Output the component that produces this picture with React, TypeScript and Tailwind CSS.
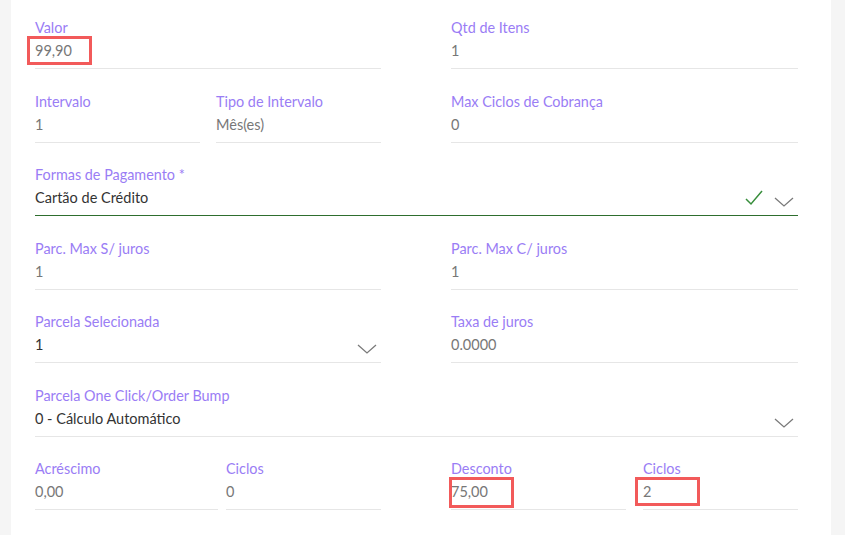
import React from 'react';

function Chevron() {
  return (
    <svg width="20" height="12" viewBox="0 0 20 12" fill="none" className="shrink-0">
      <path d="M1 2 L10 10 L19 2" stroke="#7a7a7a" strokeWidth="1.3" />
    </svg>
  );
}

function Check() {
  return (
    <svg width="18" height="16" viewBox="0 0 18 16" fill="none" className="shrink-0">
      <path d="M1 9 L6 14 L17 1" stroke="#388e3c" strokeWidth="1.5" />
    </svg>
  );
}

interface FieldProps {
  label: string;
  value: string;
  className?: string;
  boxed?: 'wide' | 'tight';
}

function TextField({ label, value, className = '', boxed }: FieldProps) {
  return (
    <div className={`flex flex-col border-b border-[#e6e6e6] pb-[10px] ${className}`}>
      <span className="text-[14.4px] leading-5 text-[#9a7df5]">{label}</span>
      <div className="relative h-5">
        <span className="text-[14.5px] leading-5 text-[#777]">{value}</span>
        {boxed === 'wide' && (
          <span className="absolute -left-2 -top-[2px] h-[29px] w-[65px] border-[3px] border-[#f25a5a]" />
        )}
        {boxed === 'tight' && (
          <span className="absolute -left-[2px] -top-[2px] h-[31px] w-[65px] border-[3px] border-[#f25a5a]" />
        )}
      </div>
    </div>
  );
}

interface SelectProps {
  label: string;
  value: string;
  valid?: boolean;
  className?: string;
}

function SelectField({ label, value, valid, className = '' }: SelectProps) {
  return (
    <div
      className={`flex flex-col pb-[7px] ${
        valid ? 'border-b border-[#2e6e2e]' : 'border-b border-[#e6e6e6]'
      } ${className}`}
    >
      <span className="text-[14.4px] leading-5 text-[#9a7df5]">{label}</span>
      <div className="mt-[3px] flex h-5 items-center justify-between">
        <span className="text-[14.5px] leading-5 text-[#333]">{value}</span>
        <div className="flex items-center gap-[11px] pr-1">
          {valid && <Check />}
          <div className="mt-2">
            <Chevron />
          </div>
        </div>
      </div>
    </div>
  );
}

export default function App() {
  return (
    <div
      className="flex h-[535px] w-[845px] overflow-hidden bg-[#f5f5f5]"
      style={{ fontFamily: 'Lato, "Noto Sans", sans-serif' }}
    >
      <div className="ml-[11px] flex w-[820px] flex-col gap-[22.5px] bg-white pl-6 pr-[33px] pt-[18px]">
        <div className="grid grid-cols-[346px_347px] gap-x-[70px]">
          <TextField label="Valor" value="99,90" boxed="wide" />
          <TextField label="Qtd de Itens" value="1" />
        </div>

        <div className="grid grid-cols-[346px_347px] gap-x-[70px]">
          <div className="grid grid-cols-[165px_165px] gap-x-4">
            <TextField label="Intervalo" value="1" />
            <TextField label="Tipo de Intervalo" value="Mês(es)" />
          </div>
          <TextField label="Max Ciclos de Cobrança" value="0" />
        </div>

        <SelectField label="Formas de Pagamento *" value="Cartão de Crédito" valid />

        <div className="grid grid-cols-[346px_347px] gap-x-[70px]">
          <TextField label="Parc. Max S/ juros" value="1" />
          <TextField label="Parc. Max C/ juros" value="1" />
        </div>

        <div className="grid grid-cols-[346px_347px] items-start gap-x-[70px]">
          <SelectField label="Parcela Selecionada" value="1" />
          <TextField label="Taxa de juros" value="0.0000" />
        </div>

        <SelectField label="Parcela One Click/Order Bump" value="0 - Cálculo Automático" />

        <div className="grid grid-cols-[346px_347px] gap-x-[70px]">
          <div className="grid grid-cols-[183px_155px] gap-x-2">
            <TextField label="Acréscimo" value="0,00" />
            <TextField label="Ciclos" value="0" />
          </div>
          <div className="grid grid-cols-[175px_155px] gap-x-[17px]">
            <TextField label="Desconto" value="75,00" boxed="tight" />
            <TextField label="Ciclos" value="2" boxed="wide" />
          </div>
        </div>
      </div>
    </div>
  );
}
